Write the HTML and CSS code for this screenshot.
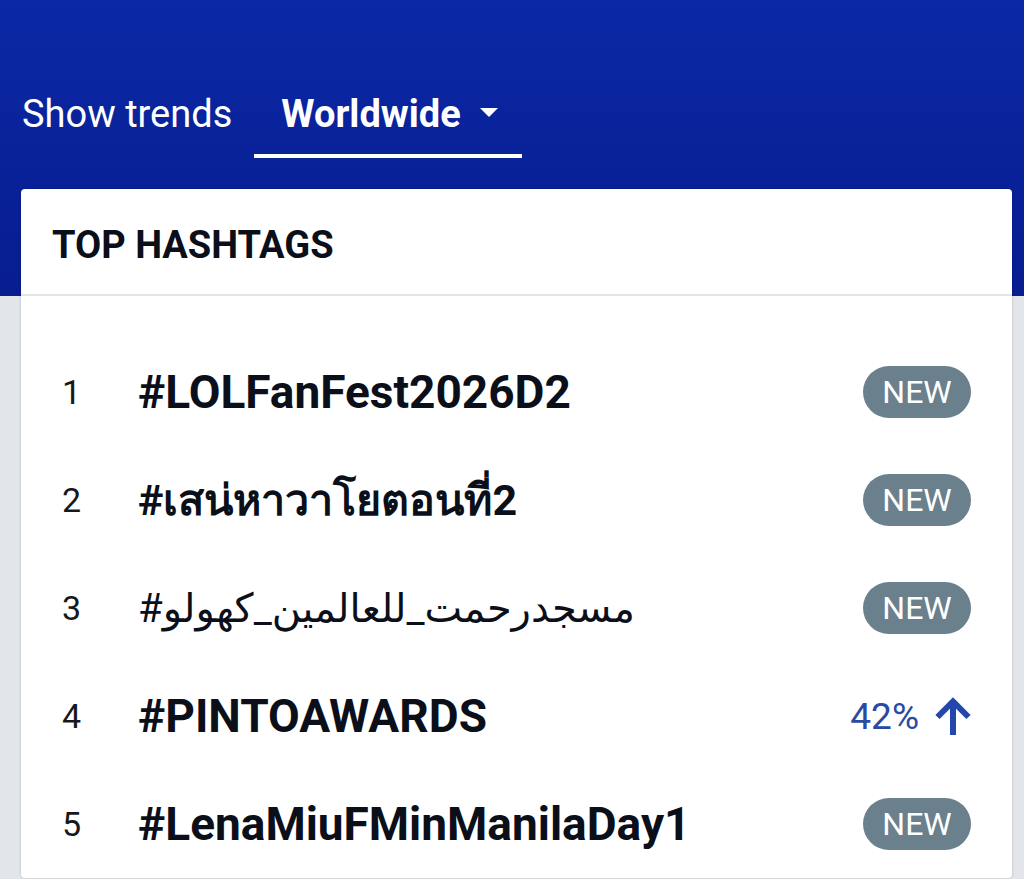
FILE: index.html
```html
<!DOCTYPE html>
<html lang="en">
<head>
    <meta charset="UTF-8">
    <meta name="viewport" content="width=device-width, initial-scale=1.0">
    <title>Trends</title>
    <link rel="stylesheet" href="styles.css">
</head>
<body>

<div class="page">
    <nav class="tabs">
        <span class="tab">Show trends</span>
        <a class="tab active" href="#">
            Worldwide
            <svg class="caret" width="18" height="9" viewBox="0 0 18 9"><path d="M0 0h18L9 9z" fill="#fff"/></svg>
        </a>
    </nav>

    <section class="card">
        <h2 class="card-head">TOP HASHTAGS</h2>
        <ol class="trends">
            <li class="trend">
                <span class="rank">1</span>
                <span class="tag">#LOLFanFest2026D2</span>
                <span class="badge">NEW</span>
            </li>
            <li class="trend">
                <span class="rank">2</span>
                <span class="tag tag-th">#เสน่หาวาโยตอนที่2</span>
                <span class="badge">NEW</span>
            </li>
            <li class="trend">
                <span class="rank">3</span>
                <span class="tag tag-ar">#مسجدرحمت_للعالمين_كهولو</span>
                <span class="badge">NEW</span>
            </li>
            <li class="trend">
                <span class="rank">4</span>
                <span class="tag">#PINTOAWARDS</span>
                <span class="change">42%
                    <svg width="36" height="38" viewBox="0 0 36 38"><path d="M18 38V6M2.5 20L18 4.5 33.5 20" fill="none" stroke="#2347ab" stroke-width="6"/></svg>
                </span>
            </li>
            <li class="trend">
                <span class="rank">5</span>
                <span class="tag">#LenaMiuFMinManilaDay1</span>
                <span class="badge">NEW</span>
            </li>
        </ol>
    </section>
</div>

</body>
</html>
```

FILE: styles.css
```css
body {
    margin: 0;
    font-family: Roboto, "Noto Sans", "DejaVu Sans", sans-serif;
    background-color: #e2e6ea;
}
.page {
    height: 879px;
    overflow: hidden;
    background: linear-gradient(#0b28a5, #071d90) no-repeat top left / 100% 296px, #e2e6ea;
}
.tabs {
    display: flex;
    align-items: flex-end;
    padding: 92px 0 0 22px;
}
.tab {
    color: #fff;
    font-size: 38px;
    line-height: 44px;
    padding-bottom: 22px;
    text-decoration: none;
}
.tab.active {
    display: flex;
    align-items: center;
    gap: 19px;
    font-weight: 700;
    margin-left: 22px;
    padding: 0 24px 18px 27px;
    border-bottom: 4px solid #fff;
}
.caret {
    margin-top: -4px;
}
.card {
    margin: 31px 12px 0 21px;
    background: #fff;
    border-radius: 4px;
    box-shadow: 0 0 3px rgba(0, 0, 0, 0.2);
}
.card-head {
    margin: 0;
    padding: 34px 31px 27px;
    font-size: 38px;
    line-height: 44px;
    font-weight: 700;
    color: #0b0f19;
    border-bottom: 2px solid #dfe6e6;
}
.trends {
    list-style: none;
    margin: 0;
    padding: 42px 41px 0;
}
.trend {
    display: flex;
    align-items: center;
    height: 108px;
}
.rank {
    width: 78px;
    font-size: 34px;
    color: #16181c;
}
.tag {
    flex: 1;
    margin-left: -2px;
    font-size: 46px;
    font-weight: 700;
    color: #0b0f19;
}
.tag-th {
    font-size: 43px;
}
.tag-ar {
    font-weight: 400;
    font-size: 40px;
}
.badge {
    width: 108px;
    height: 52px;
    line-height: 52px;
    border-radius: 26px;
    text-align: center;
    font-size: 32px;
    color: #fff;
    background: #6a808c;
}
.change {
    display: flex;
    align-items: center;
    gap: 16px;
    font-size: 37px;
    color: #2a4aa2;
}
```
